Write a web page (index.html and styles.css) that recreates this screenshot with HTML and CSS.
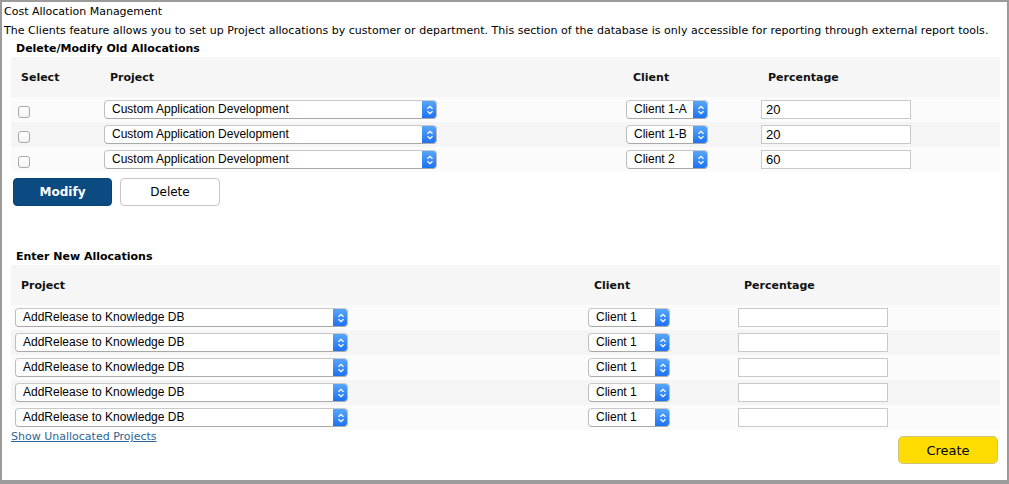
FILE: index.html
```html
<!DOCTYPE html>
<html>
<head>
<meta charset="utf-8">
<link rel="stylesheet" href="styles.css">
</head>
<body>
<div class="page">
  <div class="title">Cost Allocation Management</div>
  <p class="desc">The Clients feature allows you to set up Project allocations by customer or department. This section of the database is only accessible for reporting through external report tools.</p>

  <h2 class="section-title">Delete/Modify Old Allocations</h2>
  <div class="grid old">
    <div class="row head">
      <div class="hcell first">Select</div>
      <div class="hcell">Project</div>
      <div class="hcell c7">Client</div>
      <div class="hcell c7">Percentage</div>
    </div>
    <div class="row odd">
      <div class="cell chk"><input type="checkbox" class="checkbox"></div>
      <div class="cell"><span class="select wide"><span class="sel-text">Custom Application Development</span><span class="sel-arrow"><svg width="8" height="12" viewBox="0 0 8 12"><path d="M1.5 4.8 L4 2.3 L6.5 4.8 M1.5 7.2 L4 9.7 L6.5 7.2" fill="none" stroke="#fff" stroke-width="1.3"/></svg></span></span></div>
      <div class="cell"><span class="select narrow"><span class="sel-text">Client 1-A</span><span class="sel-arrow"><svg width="8" height="12" viewBox="0 0 8 12"><path d="M1.5 4.8 L4 2.3 L6.5 4.8 M1.5 7.2 L4 9.7 L6.5 7.2" fill="none" stroke="#fff" stroke-width="1.3"/></svg></span></span></div>
      <div class="cell"><input type="text" class="field" value="20"></div>
    </div>
    <div class="row even">
      <div class="cell chk"><input type="checkbox" class="checkbox"></div>
      <div class="cell"><span class="select wide"><span class="sel-text">Custom Application Development</span><span class="sel-arrow"><svg width="8" height="12" viewBox="0 0 8 12"><path d="M1.5 4.8 L4 2.3 L6.5 4.8 M1.5 7.2 L4 9.7 L6.5 7.2" fill="none" stroke="#fff" stroke-width="1.3"/></svg></span></span></div>
      <div class="cell"><span class="select narrow"><span class="sel-text">Client 1-B</span><span class="sel-arrow"><svg width="8" height="12" viewBox="0 0 8 12"><path d="M1.5 4.8 L4 2.3 L6.5 4.8 M1.5 7.2 L4 9.7 L6.5 7.2" fill="none" stroke="#fff" stroke-width="1.3"/></svg></span></span></div>
      <div class="cell"><input type="text" class="field" value="20"></div>
    </div>
    <div class="row odd">
      <div class="cell chk"><input type="checkbox" class="checkbox"></div>
      <div class="cell"><span class="select wide"><span class="sel-text">Custom Application Development</span><span class="sel-arrow"><svg width="8" height="12" viewBox="0 0 8 12"><path d="M1.5 4.8 L4 2.3 L6.5 4.8 M1.5 7.2 L4 9.7 L6.5 7.2" fill="none" stroke="#fff" stroke-width="1.3"/></svg></span></span></div>
      <div class="cell"><span class="select narrow"><span class="sel-text">Client 2</span><span class="sel-arrow"><svg width="8" height="12" viewBox="0 0 8 12"><path d="M1.5 4.8 L4 2.3 L6.5 4.8 M1.5 7.2 L4 9.7 L6.5 7.2" fill="none" stroke="#fff" stroke-width="1.3"/></svg></span></span></div>
      <div class="cell"><input type="text" class="field" value="60"></div>
    </div>
  </div>

  <div class="actions">
    <button class="btn primary">Modify</button>
    <button class="btn secondary">Delete</button>
  </div>

  <h2 class="section-title second">Enter New Allocations</h2>
  <div class="grid new">
    <div class="row head">
      <div class="hcell first">Project</div>
      <div class="hcell">Client</div>
      <div class="hcell">Percentage</div>
    </div>
    <div class="row odd">
      <div class="cell p4"><span class="select wide"><span class="sel-text">AddRelease to Knowledge DB</span><span class="sel-arrow"><svg width="8" height="12" viewBox="0 0 8 12"><path d="M1.5 4.8 L4 2.3 L6.5 4.8 M1.5 7.2 L4 9.7 L6.5 7.2" fill="none" stroke="#fff" stroke-width="1.3"/></svg></span></span></div>
      <div class="cell"><span class="select narrow"><span class="sel-text">Client 1</span><span class="sel-arrow"><svg width="8" height="12" viewBox="0 0 8 12"><path d="M1.5 4.8 L4 2.3 L6.5 4.8 M1.5 7.2 L4 9.7 L6.5 7.2" fill="none" stroke="#fff" stroke-width="1.3"/></svg></span></span></div>
      <div class="cell"><input type="text" class="field" value=""></div>
    </div>
    <div class="row even">
      <div class="cell p4"><span class="select wide"><span class="sel-text">AddRelease to Knowledge DB</span><span class="sel-arrow"><svg width="8" height="12" viewBox="0 0 8 12"><path d="M1.5 4.8 L4 2.3 L6.5 4.8 M1.5 7.2 L4 9.7 L6.5 7.2" fill="none" stroke="#fff" stroke-width="1.3"/></svg></span></span></div>
      <div class="cell"><span class="select narrow"><span class="sel-text">Client 1</span><span class="sel-arrow"><svg width="8" height="12" viewBox="0 0 8 12"><path d="M1.5 4.8 L4 2.3 L6.5 4.8 M1.5 7.2 L4 9.7 L6.5 7.2" fill="none" stroke="#fff" stroke-width="1.3"/></svg></span></span></div>
      <div class="cell"><input type="text" class="field" value=""></div>
    </div>
    <div class="row odd">
      <div class="cell p4"><span class="select wide"><span class="sel-text">AddRelease to Knowledge DB</span><span class="sel-arrow"><svg width="8" height="12" viewBox="0 0 8 12"><path d="M1.5 4.8 L4 2.3 L6.5 4.8 M1.5 7.2 L4 9.7 L6.5 7.2" fill="none" stroke="#fff" stroke-width="1.3"/></svg></span></span></div>
      <div class="cell"><span class="select narrow"><span class="sel-text">Client 1</span><span class="sel-arrow"><svg width="8" height="12" viewBox="0 0 8 12"><path d="M1.5 4.8 L4 2.3 L6.5 4.8 M1.5 7.2 L4 9.7 L6.5 7.2" fill="none" stroke="#fff" stroke-width="1.3"/></svg></span></span></div>
      <div class="cell"><input type="text" class="field" value=""></div>
    </div>
    <div class="row even">
      <div class="cell p4"><span class="select wide"><span class="sel-text">AddRelease to Knowledge DB</span><span class="sel-arrow"><svg width="8" height="12" viewBox="0 0 8 12"><path d="M1.5 4.8 L4 2.3 L6.5 4.8 M1.5 7.2 L4 9.7 L6.5 7.2" fill="none" stroke="#fff" stroke-width="1.3"/></svg></span></span></div>
      <div class="cell"><span class="select narrow"><span class="sel-text">Client 1</span><span class="sel-arrow"><svg width="8" height="12" viewBox="0 0 8 12"><path d="M1.5 4.8 L4 2.3 L6.5 4.8 M1.5 7.2 L4 9.7 L6.5 7.2" fill="none" stroke="#fff" stroke-width="1.3"/></svg></span></span></div>
      <div class="cell"><input type="text" class="field" value=""></div>
    </div>
    <div class="row odd">
      <div class="cell p4"><span class="select wide"><span class="sel-text">AddRelease to Knowledge DB</span><span class="sel-arrow"><svg width="8" height="12" viewBox="0 0 8 12"><path d="M1.5 4.8 L4 2.3 L6.5 4.8 M1.5 7.2 L4 9.7 L6.5 7.2" fill="none" stroke="#fff" stroke-width="1.3"/></svg></span></span></div>
      <div class="cell"><span class="select narrow"><span class="sel-text">Client 1</span><span class="sel-arrow"><svg width="8" height="12" viewBox="0 0 8 12"><path d="M1.5 4.8 L4 2.3 L6.5 4.8 M1.5 7.2 L4 9.7 L6.5 7.2" fill="none" stroke="#fff" stroke-width="1.3"/></svg></span></span></div>
      <div class="cell"><input type="text" class="field" value=""></div>
    </div>
  </div>

  <div class="footer">
    <a class="link" href="#">Show Unallocated Projects</a>
    <button class="btn create">Create</button>
  </div>
</div>
</body>
</html>
```

FILE: styles.css
```css
* { box-sizing: border-box; }
html, body { margin: 0; padding: 0; background: #fff; }
body {
  font-family: "DejaVu Sans", Verdana, sans-serif;
  font-size: 11px;
  color: #000;
}
.page {
  width: 1009px;
  height: 484px;
  border: 2px solid #9b9b9b;
  border-bottom-width: 4px;
  padding: 2px 0 0 2px;
}
.title { line-height: 16px; }
.desc { margin: 3px 0 0; line-height: 16px; letter-spacing: 0.03px; }
.section-title {
  margin: 2px 0 0;
  padding-left: 12px;
  font-size: 11px;
  font-weight: bold;
  line-height: 16px;
}
.section-title.second { margin-top: 43px; }
.grid { margin-left: 7px; width: 989px; }
.row {
  display: grid;
  align-items: center;
  height: 25px;
}
.old .row { grid-template-columns: 93px 522px 135px 1fr; }
.new .row { grid-template-columns: 577px 150px 1fr; }
.row.head { height: 40px; background: #f6f6f6; }
.row.odd { background: #fbfbfb; }
.row.even { background: #f5f5f5; }
.hcell { font-weight: bold; padding-left: 6px; color: #111; }
.hcell.first { padding-left: 10px; }
.hcell.c7 { padding-left: 7px; }
.cell { display: flex; align-items: center; }
.cell.chk { padding-left: 7px; padding-top: 4px; }
.cell.p4 { padding-left: 4px; }
.checkbox {
  appearance: none;
  -webkit-appearance: none;
  margin: 0;
  width: 12px;
  height: 12px;
  border: 1px solid #a8a8a8;
  border-radius: 3px;
  background: linear-gradient(#ffffff, #f3f3f3);
}
.select {
  display: inline-flex;
  align-items: stretch;
  height: 19px;
  border: 1px solid #bdbdbd;
  border-top-color: #c8c8c8;
  border-bottom-color: #a9a9a9;
  border-radius: 4px;
  background: #fff;
  font-family: "Liberation Sans", Arial, sans-serif;
  font-size: 12px;
  color: #000;
  overflow: hidden;
}
.select.wide { width: 333px; }
.select.narrow { width: 82px; }
.sel-text {
  flex: 1;
  padding-left: 7px;
  line-height: 17px;
  white-space: nowrap;
}
.sel-arrow {
  width: 15px;
  display: flex;
  align-items: center;
  justify-content: center;
  background: linear-gradient(#5ba9fb, #1a6ff1);
  margin: -1px -1px -1px 0;
  border-radius: 0 4px 4px 0;
}
.field {
  width: 150px;
  height: 19px;
  margin: 0;
  border: 1px solid #c9c9c9;
  padding: 0 4px;
  font-family: "Liberation Sans", Arial, sans-serif;
  font-size: 13px;
  color: #000;
  background: #fff;
  outline: none;
}
.actions {
  display: flex;
  gap: 8px;
  margin: 6px 0 0 9px;
}
.btn {
  font-family: "DejaVu Sans", Verdana, sans-serif;
  font-size: 12px;
  height: 28px;
  width: 99px;
  border-radius: 4px;
  cursor: pointer;
  padding: 0;
}
.btn.primary {
  background: #0b4b82;
  border: 1px solid #0a4476;
  color: #fff;
  font-weight: bold;
}
.btn.secondary {
  background: #fff;
  border: 1px solid #c8c8c8;
  color: #000;
  width: 100px;
}
.footer {
  display: flex;
  justify-content: space-between;
  align-items: flex-start;
  margin-left: 7px;
  width: 987px;
}
.link {
  color: #2b6596;
  font-size: 11px;
  line-height: 13px;
  text-decoration: underline;
}
.btn.create {
  margin-top: 6px;
  width: 100px;
  background: #ffdc00;
  border: 1px solid #d2c37a;
  border-radius: 5px;
  color: #000;
  font-size: 13px;
}
```
